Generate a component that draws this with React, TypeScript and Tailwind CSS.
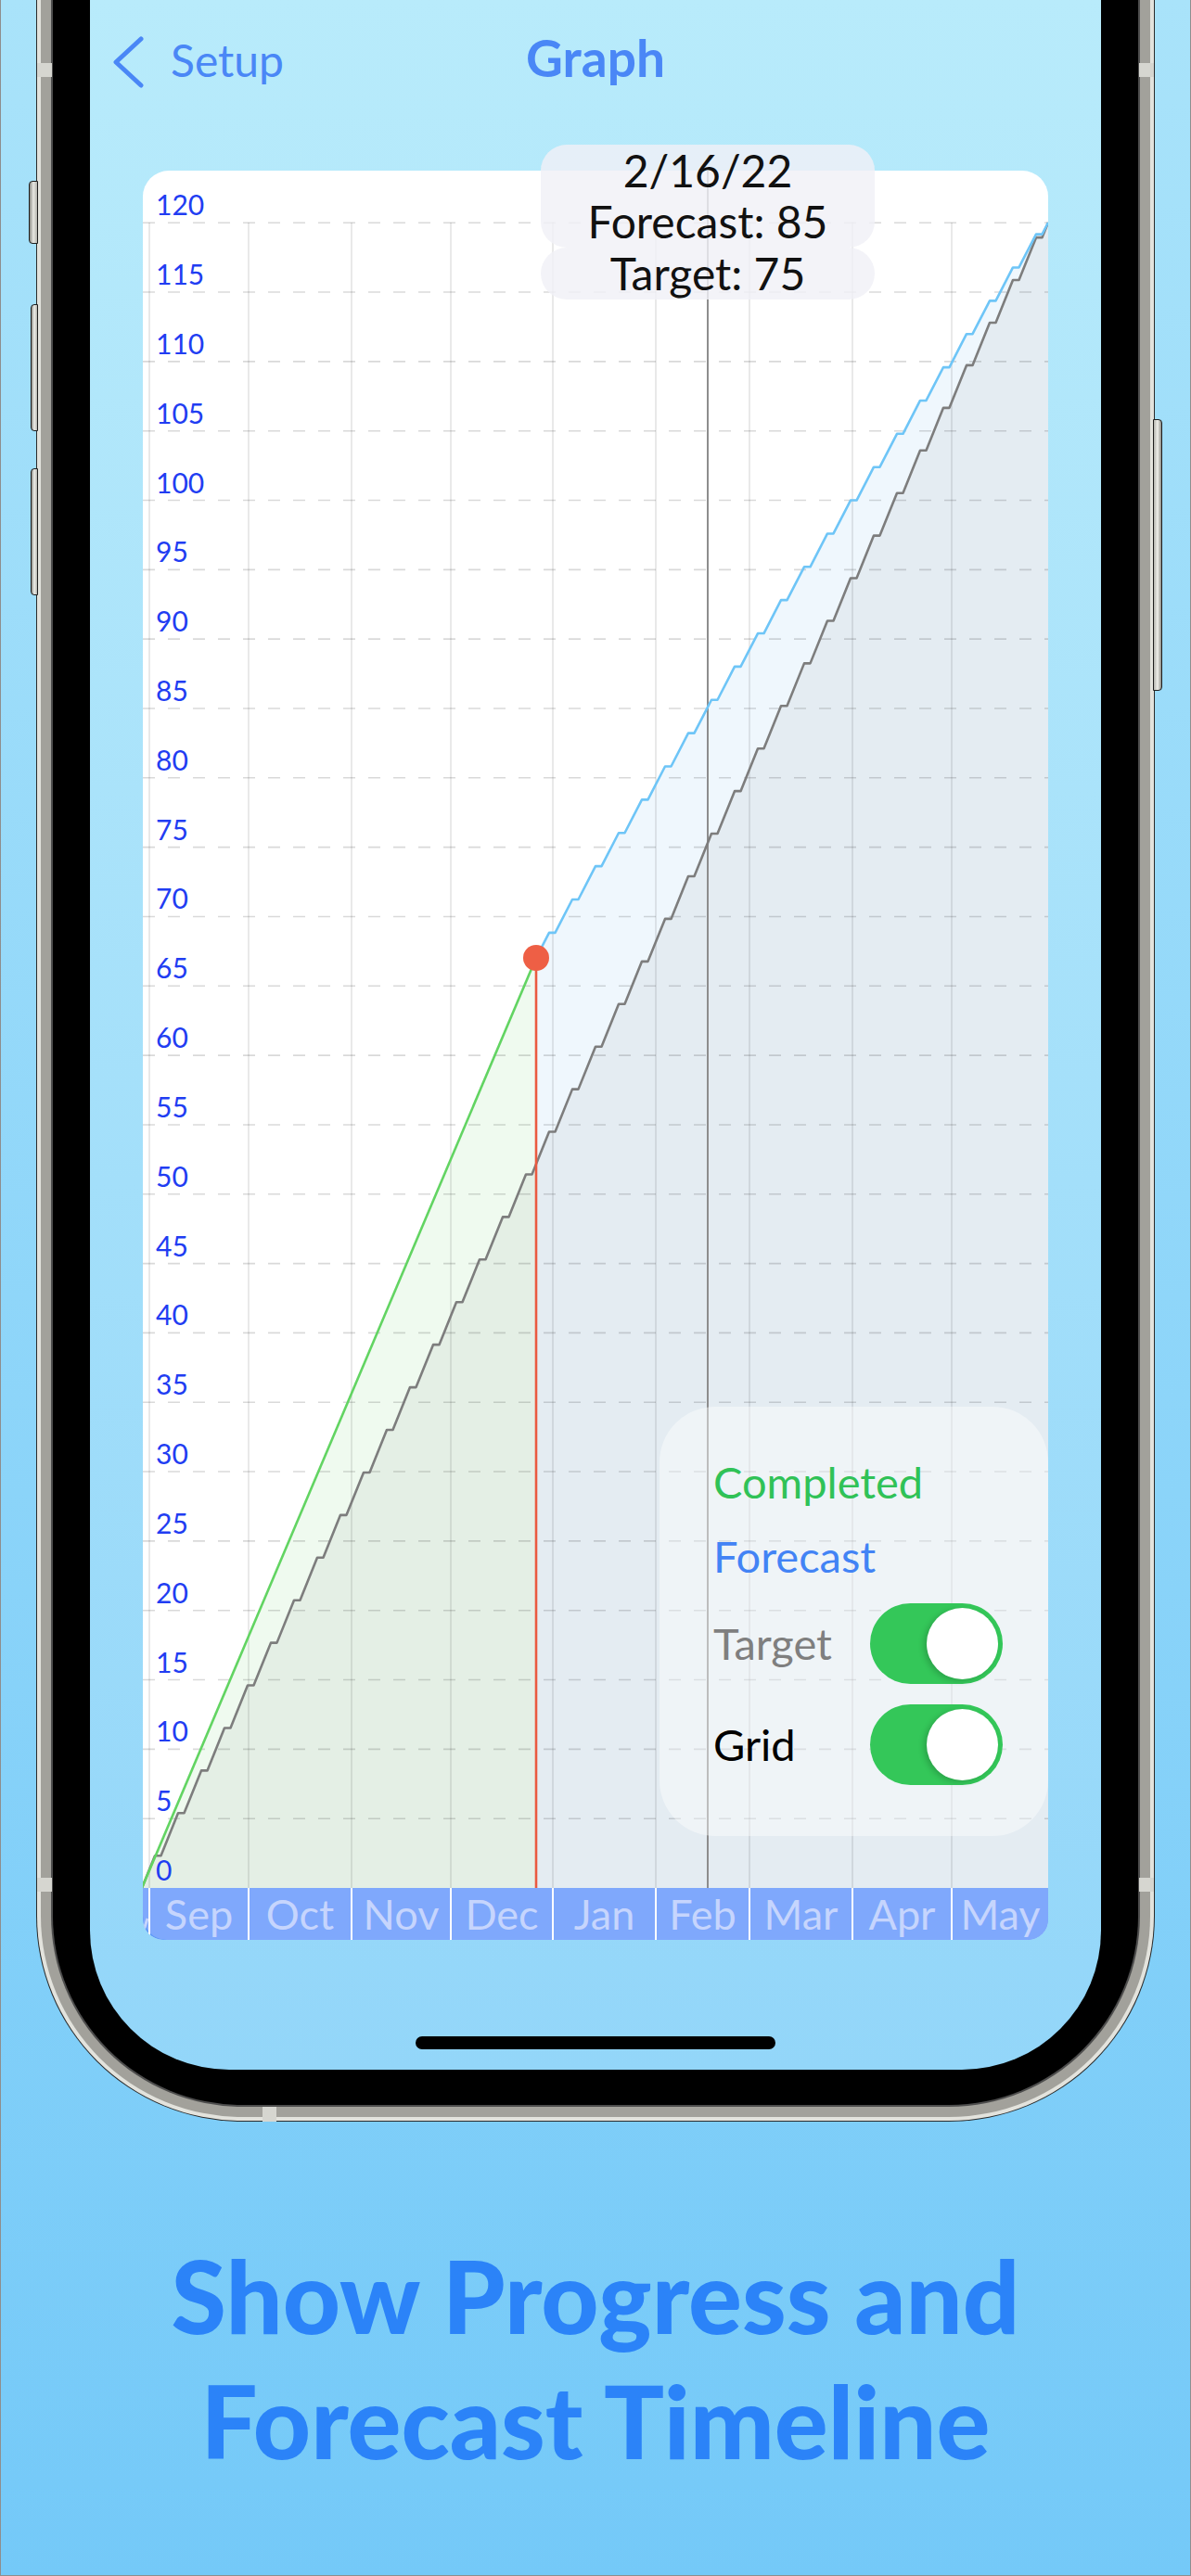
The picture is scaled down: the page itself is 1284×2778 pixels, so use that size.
import React from "react";

const Y0 = 2036;
const K = 14.965;
const yv = (v: number) => Y0 - K * v;

const P = 25;
const FW = 6.5;
const PH = 167;

function stepPoints(x0: number, y0: number, x1: number, y1: number): [number, number][] {
  const bps: number[] = [x0];
  const kStart = Math.floor((x0 - PH) / P) - 1;
  for (let k = kStart; ; k++) {
    const fs = PH + k * P;
    const fe = fs + FW;
    if (fs > x1) break;
    if (fs > x0 && fs < x1) bps.push(fs);
    if (fe > x0 && fe < x1) bps.push(fe);
  }
  bps.push(x1);
  bps.sort((a, b) => a - b);
  const isFlat = (a: number, b: number) => {
    const m = (a + b) / 2;
    const r = (((m - PH) % P) + P) % P;
    return r < FW;
  };
  let R = 0;
  for (let i = 0; i < bps.length - 1; i++) {
    if (!isFlat(bps[i], bps[i + 1])) R += bps[i + 1] - bps[i];
  }
  const rate = (y0 - y1) / R;
  const pts: [number, number][] = [[x0, y0]];
  let y = y0;
  for (let i = 0; i < bps.length - 1; i++) {
    const a = bps[i];
    const b = bps[i + 1];
    if (!isFlat(a, b)) y -= (b - a) * rate;
    pts.push([b, y]);
  }
  return pts;
}

const toD = (pts: [number, number][]) =>
  pts.map((p, i) => `${i === 0 ? "M" : "L"}${p[0].toFixed(2)},${p[1].toFixed(2)}`).join(" ");

const DOT_X = 578;
const DOT_Y = 1033;
const END_X = 1130;
const END_Y = 240;
const START_X = 153;

const targetPts = stepPoints(START_X, Y0, END_X, END_Y);
const forecastPts = stepPoints(DOT_X, DOT_Y, END_X, END_Y);

const MONTH_LINES = [161, 268, 379, 486, 596, 707, 808, 919, 1026];
const MONTHS = [
  { n: "Sep", w: 107 },
  { n: "Oct", w: 111 },
  { n: "Nov", w: 107 },
  { n: "Dec", w: 110 },
  { n: "Jan", w: 111 },
  { n: "Feb", w: 101 },
  { n: "Mar", w: 111 },
  { n: "Apr", w: 107 },
  { n: "May", w: 105 },
];

const LABELS: number[] = [];
for (let v = 0; v <= 120; v += 5) LABELS.push(v);

function Chart() {
  return (
    <svg width={976} height={1852} viewBox="154 184 976 1852" className="block">
      {/* fills */}
      <path d={`M${START_X},${Y0} L${DOT_X},${DOT_Y} L${DOT_X},${Y0} Z`} fill="#effaef" />
      <path
        d={`${toD(forecastPts)} L${END_X},${Y0} L${DOT_X},${Y0} Z`}
        fill="#eff7fd"
      />
      <path d={`${toD(targetPts)} L${END_X},${Y0} Z`} fill="rgba(80,100,100,0.072)" />

      {/* vertical grid */}
      {MONTH_LINES.map((x) => (
        <line key={x} x1={x} x2={x} y1={240} y2={Y0} stroke="rgba(0,0,0,0.085)" strokeWidth={2} />
      ))}
      {/* horizontal dashed grid */}
      {LABELS.filter((v) => v > 0).map((v) => (
        <line
          key={v}
          x1={154}
          x2={1130}
          y1={yv(v)}
          y2={yv(v)}
          stroke="rgba(0,0,0,0.15)"
          strokeWidth={1.6}
          strokeDasharray="13 14"
        />
      ))}

      {/* selection line */}
      <line x1={763} x2={763} y1={184} y2={Y0} stroke="#8d8d8d" strokeWidth={2} />

      {/* labels */}
      {LABELS.map((v) => (
        <text
          key={v}
          x={168}
          y={yv(v) - 8}
          fontSize={30}
          fill="#213df2"
          fontFamily="Lato, sans-serif"
        >
          {v}
        </text>
      ))}

      {/* series */}
      <path d={toD(targetPts)} fill="none" stroke="#7d7d7d" strokeWidth={2.6} strokeLinejoin="round" />
      <path d={toD(forecastPts)} fill="none" stroke="#6ec5f7" strokeWidth={2.6} strokeLinejoin="round" />
      <line x1={START_X} y1={Y0} x2={DOT_X} y2={DOT_Y} stroke="#62d462" strokeWidth={2.6} />
      <line x1={DOT_X} x2={DOT_X} y1={DOT_Y} y2={Y0} stroke="#ea5a40" strokeWidth={2.6} />
      <circle cx={DOT_X} cy={DOT_Y} r={14} fill="#ee5f45" />
    </svg>
  );
}

function Toggle() {
  return (
    <div className="w-[143px] h-[87px] rounded-full bg-[#34c759] flex items-center justify-end pr-[5px]">
      <div className="w-[77px] h-[77px] rounded-full bg-white shadow-[-3px_2px_6px_rgba(0,0,0,0.18)]" />
    </div>
  );
}

function Card() {
  return (
    <div className="relative mt-[51px] mx-[57px]">
      <div className="rounded-t-[28px] rounded-b-[22px] overflow-hidden bg-white flex flex-col">
        <Chart />
        <div className="h-[56px] bg-[#5c9bf7]">
          <div className="h-[56px] flex bg-[#7fa8fc] rounded-bl-[26px] rounded-br-[20px] text-[45px] leading-[56px] text-[#c6d5fd]">
            <div className="w-[6px] flex items-end pb-[10px]">
              <svg width={6} height={30} viewBox="0 0 6 30">
                <line x1={1} y1={29} x2={5} y2={17} stroke="#c6d5fd" strokeWidth={3} />
              </svg>
            </div>
            {MONTHS.map((m) => (
              <div
                key={m.n}
                className="border-l-2 border-white flex justify-center"
                style={{ width: m.w }}
              >
                <span>{m.n}</span>
              </div>
            ))}
          </div>
        </div>
      </div>

      {/* tooltip */}
      <div className="absolute left-[429px] -top-[28px] w-[360px] flex flex-col text-[48px] leading-[55px] text-[#111]">
        <div className="h-[111px] rounded-[28px] bg-[rgba(240,240,246,0.82)] flex flex-col items-center">
          <span>2/16/22</span>
          <span>Forecast: 85</span>
        </div>
        <div className="h-[56px] rounded-[28px] bg-[rgba(240,240,246,0.82)] flex flex-col items-center">
          <span>Target: 75</span>
        </div>
      </div>

      {/* legend */}
      <div className="absolute left-[557px] top-[1333px] w-[419px] h-[463px] rounded-[60px] bg-[rgba(255,255,255,0.42)] pl-[58px] pr-[49px] pt-[41px] flex flex-col text-[47px]">
        <div className="h-[80px] leading-[80px] text-[#30c257]">Completed</div>
        <div className="h-[80px] leading-[80px] text-[#4283f5]">Forecast</div>
        <div className="mt-[11px] h-[87px] flex items-center justify-between">
          <span className="text-[#7f7f7f]">Target</span>
          <Toggle />
        </div>
        <div className="mt-[22px] h-[87px] flex items-center justify-between">
          <span className="text-black">Grid</span>
          <Toggle />
        </div>
      </div>
    </div>
  );
}

function Screen() {
  return (
    <div className="w-[1090px] h-[2232px] rounded-b-[150px] bg-gradient-to-b from-[#b8ebfb] to-[#93d6f9] flex flex-col overflow-hidden">
      <div className="h-[133px] grid grid-cols-[1fr_auto_1fr] items-center text-[#4a87f6]">
        <div className="flex items-center pl-[24px] gap-[29px]">
          <svg width={34} height={56} viewBox="0 0 34 56">
            <polyline
              points="31,3 4,28 31,53"
              fill="none"
              stroke="#4a87f6"
              strokeWidth={5}
              strokeLinecap="round"
              strokeLinejoin="round"
            />
          </svg>
          <span className="text-[48px] leading-[56px] -mt-[4px]">Setup</span>
        </div>
        <div className="text-[55px] leading-[64px] font-bold -mt-[10px]">Graph</div>
        <div />
      </div>
      <Card />
      <div className="mt-[104px] mx-auto w-[388px] h-[14px] rounded-full bg-black" />
    </div>
  );
}

function Phone() {
  return (
    <div className="ml-[39px] w-[1206px] bg-[#2b2b2b] px-[1px] pb-[1px] rounded-b-[222px]">
      <div className="bg-[#e3e3dd] px-[4px] pb-[4px] rounded-b-[221px]">
        <div className="bg-[#a2a19b] px-[11px] pb-[11px] rounded-b-[217px]">
          <div className="bg-[#4d4d4d] px-[2px] pb-[2px] rounded-b-[206px]">
            <div className="bg-black px-[40px] pb-[38px] rounded-b-[204px]">
              <Screen />
            </div>
          </div>
        </div>
      </div>
    </div>
  );
}

export default function App() {
  return (
    <div className="relative w-[1284px] h-[2778px] overflow-hidden bg-gradient-to-b from-[#a9e3fa] to-[#74c9f8] font-['Lato',sans-serif] shadow-[inset_1px_0_0_#8e8e8e,inset_-1px_0_0_#8e8e8e,inset_0_-1px_0_#8e8e8e] flex flex-col">
      <Phone />

      {/* side buttons */}
      <div className="absolute left-[31px] top-[195px] w-[10px] h-[68px] rounded-l-[4px] border border-[#1e1e1e] bg-gradient-to-r from-[#8c8c86] via-[#e9e9e4] to-[#b4b4ae]" />
      <div className="absolute left-[33px] top-[328px] w-[8px] h-[137px] rounded-l-[4px] border border-[#1e1e1e] bg-gradient-to-r from-[#8c8c86] via-[#f0f0eb] to-[#b4b4ae]" />
      <div className="absolute left-[33px] top-[505px] w-[8px] h-[137px] rounded-l-[4px] border border-[#1e1e1e] bg-gradient-to-r from-[#8c8c86] via-[#f0f0eb] to-[#b4b4ae]" />
      <div className="absolute left-[1243px] top-[452px] w-[10px] h-[293px] rounded-r-[4px] border border-[#1e1e1e] bg-gradient-to-l from-[#8c8c86] via-[#f0f0eb] to-[#b4b4ae]" />

      {/* antenna bands */}
      <div className="absolute left-[40px] top-[68px] w-[16px] h-[15px] bg-[#d6d6d0]" />
      <div className="absolute left-[1228px] top-[68px] w-[16px] h-[15px] bg-[#d6d6d0]" />
      <div className="absolute left-[40px] top-[2025px] w-[16px] h-[15px] bg-[#d6d6d0]" />
      <div className="absolute left-[1228px] top-[2025px] w-[16px] h-[15px] bg-[#d6d6d0]" />
      <div className="absolute left-[283px] top-[2272px] w-[15px] h-[16px] bg-[#d6d6d0]" />

      <h1 className="mt-[120px] text-center text-[108px] leading-[135px] font-black text-[#2b83f8]">
        Show Progress and
        <br />
        Forecast Timeline
      </h1>
    </div>
  );
}
